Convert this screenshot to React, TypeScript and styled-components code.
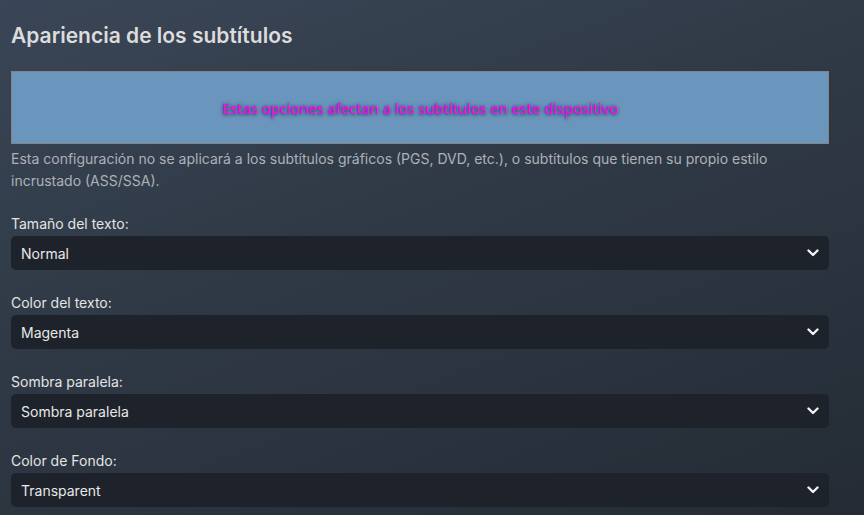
import React from 'react'
import styled, { createGlobalStyle } from 'styled-components'

const GlobalStyle = createGlobalStyle`
  html, body {
    margin: 0;
    padding: 0;
    height: 100%;
  }
  body {
    font-family: Inter, "Noto Sans", sans-serif;
    background: linear-gradient(160deg, #3a4657 0%, #2f3945 45%, #242b35 100%);
    background-attachment: fixed;
    color: #e6e6e6;
    overflow: hidden;
  }
`

const Page = styled.div`
  width: 864px;
  height: 515px;
  box-sizing: border-box;
  padding: 0 35px 0 11px;
  display: flex;
  flex-direction: column;
`

const Title = styled.h2`
  margin: 23px 0 0;
  font-size: 21px;
  line-height: 25px;
  font-weight: 600;
  color: #dcdcdc;
`

const Preview = styled.div`
  margin-top: 23px;
  height: 73px;
  box-sizing: border-box;
  border: 1px solid #848484;
  background: #6a96be;
  display: flex;
  align-items: center;
  justify-content: center;
`

const PreviewText = styled.span`
  font-family: "Noto Sans", sans-serif;
  font-size: 14.7px;
  color: #ff00ff;
  text-shadow: 0 0 4px rgba(0, 0, 0, 0.55), 0 1px 3px rgba(0, 0, 0, 0.4);
`

const Note = styled.p`
  margin: 4px 0 0;
  font-size: 14px;
  line-height: 22px;
  color: #adb1b7;
  max-width: 800px;
`

const Fields = styled.div`
  margin-top: 21px;
  display: flex;
  flex-direction: column;
  gap: 22px;
`

const Field = styled.div`
  display: flex;
  flex-direction: column;
  gap: 2px;
`

const Label = styled.label`
  font-size: 14px;
  line-height: 21px;
  color: #e4e4e4;
`

const SelectBox = styled.div`
  position: relative;
  height: 34px;
  border-radius: 5px;
  background: #1d222b;
  display: flex;
  align-items: center;
  padding: 0 10px;
  font-size: 14px;
  color: #e8e8e8;
`

const Chevron = styled.svg`
  position: absolute;
  right: 10px;
  top: 50%;
  transform: translateY(-50%);
`

const fields = [
  { label: 'Tamaño del texto:', value: 'Normal' },
  { label: 'Color del texto:', value: 'Magenta' },
  { label: 'Sombra paralela:', value: 'Sombra paralela' },
  { label: 'Color de Fondo:', value: 'Transparent' },
]

const App: React.FC = () => {
  return (
    <>
      <GlobalStyle />
      <Page>
        <Title>Apariencia de los subtítulos</Title>
        <Preview>
          <PreviewText>Estas opciones afectan a los subtítulos en este dispositivo</PreviewText>
        </Preview>
        <Note>
          Esta configuración no se aplicará a los subtítulos gráficos (PGS, DVD, etc.), o
          subtítulos que tienen su propio estilo incrustado (ASS/SSA).
        </Note>
        <Fields>
          {fields.map((f) => (
            <Field key={f.label}>
              <Label>{f.label}</Label>
              <SelectBox>
                {f.value}
                <Chevron width="12" height="8" viewBox="0 0 12 8">
                  <path
                    d="M1.5 1.5 L6 6 L10.5 1.5"
                    fill="none"
                    stroke="#f2f2f2"
                    strokeWidth="2.4"
                    strokeLinecap="round"
                    strokeLinejoin="round"
                  />
                </Chevron>
              </SelectBox>
            </Field>
          ))}
        </Fields>
      </Page>
    </>
  )
}

export default App
